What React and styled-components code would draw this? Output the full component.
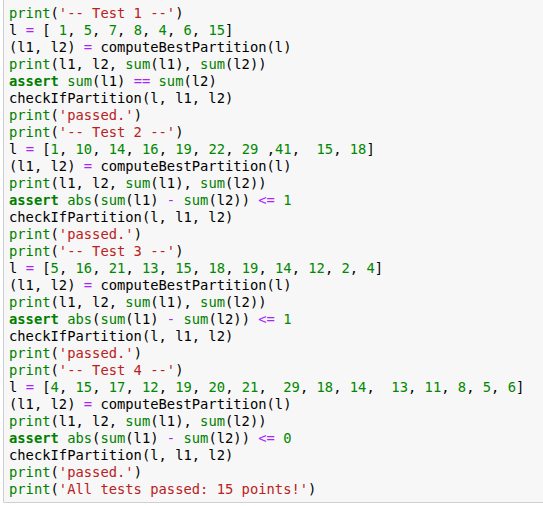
import React from "react";
import styled, { createGlobalStyle } from "styled-components";

const GlobalStyle = createGlobalStyle`
  html, body {
    margin: 0;
    padding: 0;
    background: #ffffff;
    overflow: hidden;
  }
`;

const code = `print('-- Test 1 --')
l = [ 1, 5, 7, 8, 4, 6, 15]
(l1, l2) = computeBestPartition(l)
print(l1, l2, sum(l1), sum(l2))
assert sum(l1) == sum(l2)
checkIfPartition(l, l1, l2)
print('passed.')
print('-- Test 2 --')
l = [1, 10, 14, 16, 19, 22, 29 ,41,  15, 18]
(l1, l2) = computeBestPartition(l)
print(l1, l2, sum(l1), sum(l2))
assert abs(sum(l1) - sum(l2)) <= 1
checkIfPartition(l, l1, l2)
print('passed.')
print('-- Test 3 --')
l = [5, 16, 21, 13, 15, 18, 19, 14, 12, 2, 4]
(l1, l2) = computeBestPartition(l)
print(l1, l2, sum(l1), sum(l2))
assert abs(sum(l1) - sum(l2)) <= 1
checkIfPartition(l, l1, l2)
print('passed.')
print('-- Test 4 --')
l = [4, 15, 17, 12, 19, 20, 21,  29, 18, 14,  13, 11, 8, 5, 6]
(l1, l2) = computeBestPartition(l)
print(l1, l2, sum(l1), sum(l2))
assert abs(sum(l1) - sum(l2)) <= 0
checkIfPartition(l, l1, l2)
print('passed.')
print('All tests passed: 15 points!')`;

const TOKEN = /('[^']*')|(\b(?:print|sum|abs)\b)|(\bassert\b)|(==|<=|=|-)|(\b\d+\b)/g;
const KINDS = [null, "string", "builtin", "keyword", "operator", "number"];

const highlight = (line) => {
  const parts = [];
  let last = 0;
  let m;
  TOKEN.lastIndex = 0;
  while ((m = TOKEN.exec(line))) {
    if (m.index > last) parts.push({ kind: "plain", text: line.slice(last, m.index) });
    const idx = m.findIndex((g, i) => i > 0 && g !== undefined);
    parts.push({ kind: KINDS[idx], text: m[0] });
    last = m.index + m[0].length;
  }
  if (last < line.length) parts.push({ kind: "plain", text: line.slice(last) });
  return parts;
};

const colors = {
  plain: "#000000",
  string: "#ba2121",
  builtin: "#008000",
  keyword: "#008000",
  operator: "#aa22ff",
  number: "#008800",
};

const Cell = styled.div`
  margin-left: 3px;
  background: #f7f7f7;
  border: 1px solid #cfcfcf;
  border-top: none;
  border-right: none;
  border-radius: 0 0 0 2px;
  padding: 5px 0 4px 5px;
  box-sizing: border-box;
`;

const Code = styled.pre`
  margin: 0;
  font-family: "DejaVu Sans Mono", "Liberation Mono", monospace;
  font-size: 13.8px;
  line-height: 17px;
  color: #000;
  white-space: pre;
`;

const Line = styled.div`
  height: 17px;
`;

const Token = styled.span`
  color: ${(p) => colors[p.$kind]};
  font-weight: ${(p) => (p.$kind === "keyword" ? "bold" : "normal")};
`;

const App = () => {
  return (
    <>
      <GlobalStyle />
      <Cell>
        <Code>
          {code.split("\n").map((line, i) => (
            <Line key={i}>
              {highlight(line).map((t, j) => (
                <Token key={j} $kind={t.kind}>
                  {t.text}
                </Token>
              ))}
            </Line>
          ))}
        </Code>
      </Cell>
    </>
  );
};

export default App;
